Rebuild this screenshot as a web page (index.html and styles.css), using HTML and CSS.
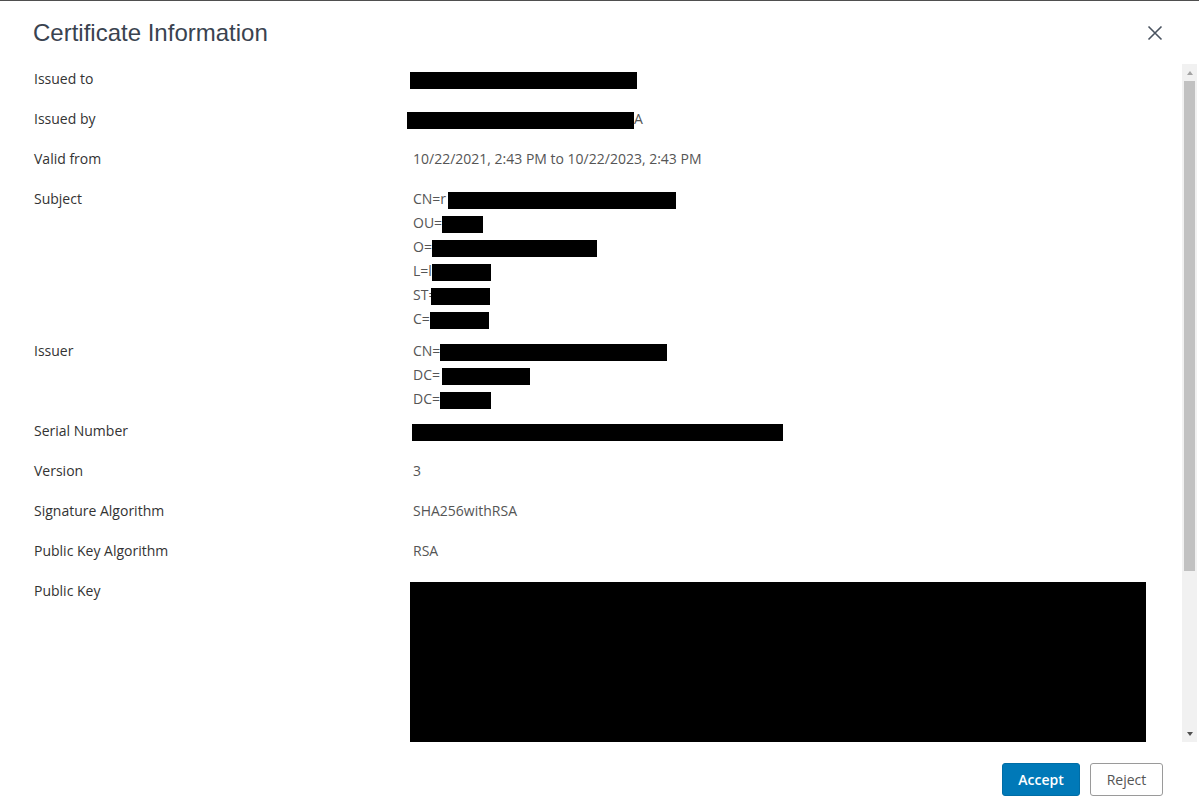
FILE: index.html
```html
<!DOCTYPE html>
<html lang="en">
<head>
  <meta charset="UTF-8" />
  <meta name="viewport" content="width=device-width, initial-scale=1.0"/>
  <title>Certificate Information</title>
  <link rel="stylesheet" href="styles.css">
</head>
<body>
  <!-- Certificate dialog -->
  <div class="modal">
    <div class="modal-header">
      <h3 class="modal-title">Certificate Information</h3>
      <button class="close" aria-label="Close">
        <svg width="16" height="16" viewBox="0 0 16 16">
          <path d="M1.5 1.5 L14.5 14.5 M14.5 1.5 L1.5 14.5" stroke="#4a5360" stroke-width="1.6" fill="none"/>
        </svg>
      </button>
    </div>

    <div class="modal-body">
      <dl class="cert">
        <div class="row">
          <dt class="label">Issued to</dt>
          <dd class="value"><span class="redact shift" style="width:227px"></span></dd>
        </div>
        <div class="row">
          <dt class="label">Issued by</dt>
          <dd class="value"><span class="redact shift-more" style="width:227px"></span>A</dd>
        </div>
        <div class="row">
          <dt class="label">Valid from</dt>
          <dd class="value">10/22/2021, 2:43 PM to 10/22/2023, 2:43 PM</dd>
        </div>
        <div class="row">
          <dt class="label">Subject</dt>
          <dd class="value">
            <div>CN=r<span class="redact nudge" style="width:228px"></span></div>
            <div>OU=<span class="redact" style="width:41px"></span></div>
            <div>O=<span class="redact" style="width:165px"></span></div>
            <div>L=l<span class="redact" style="width:59px"></span></div>
            <div>ST=<span class="redact overlap" style="width:59px"></span></div>
            <div>C=<span class="redact" style="width:59px"></span></div>
          </dd>
        </div>
        <div class="row">
          <dt class="label">Issuer</dt>
          <dd class="value">
            <div>CN=<span class="redact" style="width:227px"></span></div>
            <div>DC=<span class="redact nudge" style="width:88px"></span></div>
            <div>DC=<span class="redact" style="width:51px"></span></div>
          </dd>
        </div>
        <div class="row">
          <dt class="label">Serial Number</dt>
          <dd class="value"><span class="redact shift-less" style="width:371px"></span></dd>
        </div>
        <div class="row">
          <dt class="label">Version</dt>
          <dd class="value">3</dd>
        </div>
        <div class="row">
          <dt class="label">Signature Algorithm</dt>
          <dd class="value">SHA256withRSA</dd>
        </div>
        <div class="row">
          <dt class="label">Public Key Algorithm</dt>
          <dd class="value">RSA</dd>
        </div>
        <div class="row">
          <dt class="label">Public Key</dt>
          <dd class="value"><div class="key-block"></div></dd>
        </div>
      </dl>

      <!-- Vertical scrollbar of the body -->
      <div class="scrollbar" aria-hidden="true">
        <span class="arrow arrow-up"></span>
        <div class="thumb-track"><div class="thumb"></div></div>
        <span class="arrow arrow-down"></span>
      </div>
    </div>

    <div class="modal-footer">
      <button class="btn btn-primary">Accept</button>
      <button class="btn btn-outline">Reject</button>
    </div>
  </div>
</body>
</html>
```

FILE: styles.css
```css
/* Page */
html, body {
  margin: 0;
  height: 100%;
  background: #fff;
}

body {
  font-family: 'Open Sans', 'Liberation Sans', sans-serif;
  font-size: 14px;
  color: #555;
  overflow: hidden;
}

/* Dialog frame */
.modal {
  display: flex;
  flex-direction: column;
  height: 812px;
  border-top: 1px solid #4f4f4f;
  box-sizing: border-box;
}

.modal-header {
  display: flex;
  align-items: center;
  justify-content: space-between;
  height: 63px;
  padding: 0 34px 0 33px;
  flex-shrink: 0;
}

.modal-title {
  margin: 0;
  font-family: 'Liberation Sans', Arial, sans-serif;
  font-weight: normal;
  font-size: 24px;
  color: #3a4350;
}

.close {
  background: none;
  border: none;
  padding: 2px;
  cursor: pointer;
  line-height: 0;
}

/* Scrolling body */
.modal-body {
  display: flex;
  height: 678px;
  flex-shrink: 0;
  overflow: hidden;
}

.cert {
  flex: 1;
  margin: 0;
  padding: 3px 0 0 34px;
  overflow: hidden;
}

.scrollbar {
  width: 15px;
  margin-right: 2px;
  display: flex;
  flex-direction: column;
  background: #f1f1f1;
}

.arrow {
  height: 17px;
  display: flex;
  align-items: center;
  justify-content: center;
}

.arrow::before {
  content: "";
  border-left: 3.5px solid transparent;
  border-right: 3.5px solid transparent;
}

.arrow-up::before {
  border-bottom: 4px solid #a3a3a3;
}

.arrow-down::before {
  border-top: 4px solid #505050;
}

.thumb-track {
  flex: 1;
  padding: 0 2px;
}

.thumb {
  height: 490px;
  background: #c1c1c1;
}

/* Rows */
.row {
  display: flex;
  padding-bottom: 8px;
  line-height: 24px;
}

.label {
  width: 365px;
  flex-shrink: 0;
  padding-bottom: 8px;
  color: #333;
}

.value {
  margin: 0;
  padding-left: 14px;
  color: #555;
}

/* Redacted values */
.redact {
  display: inline-block;
  height: 17px;
  background: #000;
  vertical-align: middle;
}

.redact.shift { margin-left: -3px; }
.redact.shift-more { margin-left: -6px; }
.redact.shift-less { margin-left: -1px; }
.redact.nudge { margin-left: 2px; }
.redact.overlap { margin-left: -5px; }

.key-block {
  width: 736px;
  height: 372px;
  margin: 3px 0 0 -3px;
  background: #000;
}

/* Footer buttons */
.modal-footer {
  display: flex;
  justify-content: flex-end;
  gap: 10px;
  padding: 21px 36px 0 0;
}

.btn {
  height: 33px;
  padding: 0;
  font-family: 'Open Sans', sans-serif;
  font-size: 14px;
  border-radius: 3px;
  cursor: pointer;
}

.btn-primary {
  width: 78px;
  background: #0079b8;
  border: 1px solid #006da6;
  color: #fff;
  font-weight: 600;
}

.btn-outline {
  width: 73px;
  background: #fff;
  border: 1px solid #9a9a9a;
  color: #555;
}
```
